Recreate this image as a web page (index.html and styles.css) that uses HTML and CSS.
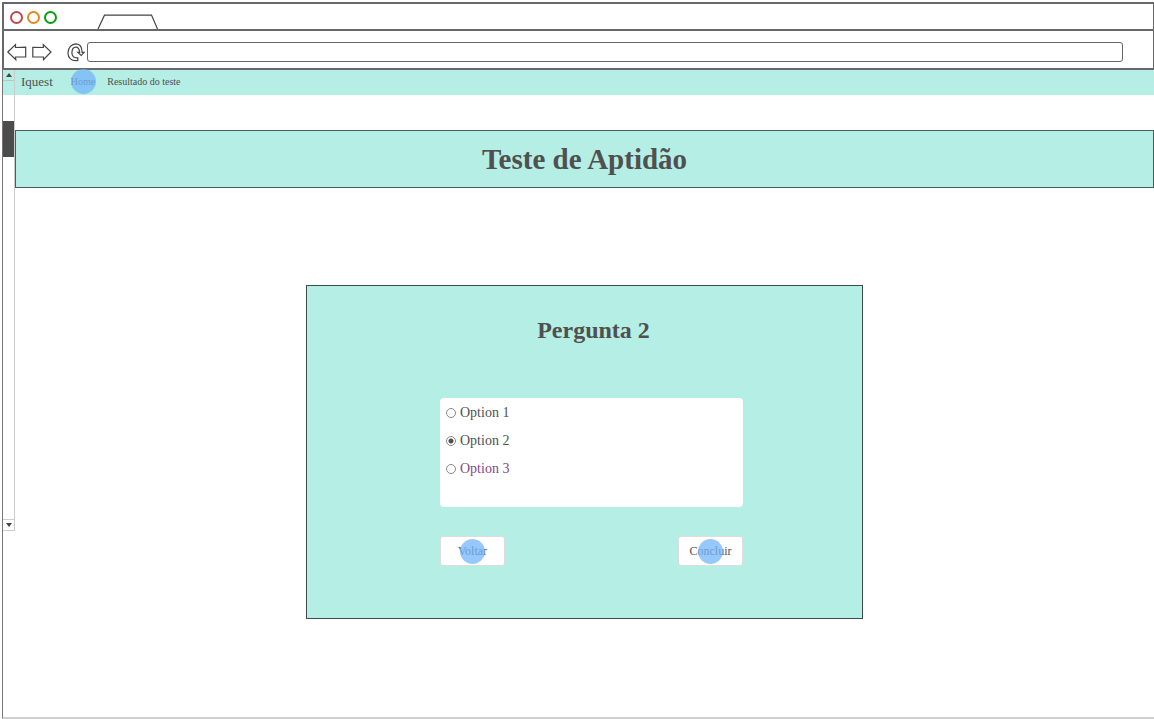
FILE: index.html
```html
<!DOCTYPE html>
<html lang="pt">
<head>
<meta charset="utf-8">
<title>Iquest - Teste de Aptidão</title>
<link rel="stylesheet" href="styles.css">
</head>
<body>
<div class="window">
  <header class="chrome">
    <div class="tabs">
      <span class="light light-close"></span>
      <span class="light light-min"></span>
      <span class="light light-max"></span>
      <svg class="tab" width="62" height="15" viewBox="0 0 62 15" aria-hidden="true"><path d="M1 15L7.500 1.200L54.500 1L60.500 15"/></svg>
    </div>
    <div class="toolbar">
      <button class="tool" aria-label="Voltar página"><svg width="20" height="18" viewBox="0 0 20 18"><path d="M.8 9L8.500 1.600V4.500L18.700 4.200V14H8.500L8.800 16.700Z"/></svg></button>
      <button class="tool" aria-label="Avançar página"><svg width="20" height="18" viewBox="0 0 20 18"><path d="M.8 4.300L11.300 4.500V1.600L19 9L11.500 16.700V14H.8Z"/></svg></button>
      <button class="tool reload" aria-label="Recarregar"><svg width="18" height="20" viewBox="0 0 18 20"><path d="M10.800 18.500C4.500 19.500.8 15.800 1 10.800C1.200 5.500 4.500 2 9 1.800C12.700 1.900 15 5.200 15.100 10.300H17.200L14.200 13.500L10.900 10.400H12.700C12.200 6.800 10.800 5.100 8.900 5.200C6.500 5.300 5 7.500 4.900 10.500C4.800 14 6.800 16.200 10.800 15.800Z"/></svg></button>
      <input class="address" type="text" aria-label="Endereço">
    </div>
  </header>

  <div class="page">
    <div class="scrollbar" aria-hidden="true">
      <span class="arrow"><svg width="6" height="4" viewBox="0 0 6 4"><path d="M3 0L6 4H0Z"/></svg></span>
      <span class="thumb"></span>
      <span class="arrow arrow-down"><svg width="6" height="4" viewBox="0 0 6 4"><path d="M0 0H6L3 4Z"/></svg></span>
    </div>
    <nav class="nav">
      <a class="brand" href="#">Iquest</a>
      <a class="link hotspot" href="#">Home</a>
      <a class="link" href="#">Resultado do teste</a>
    </nav>
    <main class="content">
      <h1 class="title">Teste de Aptidão</h1>
      <form class="card">
        <h2 class="question">Pergunta 2</h2>
        <div class="options">
          <label class="option"><input type="radio" name="answer">Option 1</label>
          <label class="option"><input type="radio" name="answer" checked>Option 2</label>
          <label class="option option-alt"><input type="radio" name="answer">Option 3</label>
        </div>
        <div class="actions">
          <button class="action hotspot" type="button">Voltar</button>
          <button class="action hotspot" type="button">Concluir</button>
        </div>
      </form>
    </main>
  </div>
</div>
</body>
</html>
```
FILE: styles.css
```css
* { box-sizing: border-box; }

body {
  margin: 0;
  background: #fff;
  color: #505050;
  font-family: "Liberation Serif", "Times New Roman", serif;
}

.window {
  display: flex;
  flex-direction: column;
  min-height: 100vh;
  padding: 2px 0 0 2px;
}

.chrome { border: 2px solid #686868; border-right-width: 1px; }

.tabs {
  display: flex;
  align-items: center;
  gap: 4px;
  height: 25px;
  padding-left: 6px;
}

.light {
  width: 13px;
  height: 13px;
  margin-top: 2px;
  border: 2px solid;
  border-radius: 50%;
}
.light-close { border-color: #c0484e; }
.light-min { border-color: #e08a20; }
.light-max { border-color: #05a010; }

.tab { align-self: flex-end; margin-left: 36px; }

.tab path, .tool path {
  fill: none;
  stroke: #444;
  stroke-width: 1.2;
}

.toolbar {
  display: flex;
  align-items: center;
  height: 39px;
  padding: 5px 30px 0 3px;
  border-top: 2px solid #686868;
}

.tool {
  display: flex;
  padding: 0;
  margin-right: 5px;
  border: 0;
  background: none;
}
.reload { margin: 0 2px 0 10px; }

.address {
  flex: 1;
  min-width: 0;
  height: 20px;
  padding: 0 6px;
  border: 1px solid #666;
  border-radius: 3px;
  background: #fff;
  font: inherit;
}

.page {
  position: relative;
  flex: 1;
  border-left: 1px solid #777;
  border-bottom: 2px solid #d0d0d0;
}

/* Lies over the left end of the navigation bar */
.scrollbar {
  position: absolute;
  top: 0;
  left: 0;
  display: flex;
  flex-direction: column;
  width: 12px;
  height: 461px;
  border: 1px solid #ccc;
  border-width: 0 1px 1px 0;
}

.arrow {
  display: flex;
  justify-content: center;
  align-items: center;
  height: 11px;
  border-bottom: 1px solid #b5c8c4;
}
.arrow path { fill: #444; }
.arrow-down { margin-top: auto; border-top: 1px solid #ccc; border-bottom: 0; }

.thumb { height: 36px; margin-top: 40px; background: #4c4c4c; }

.nav {
  display: flex;
  align-items: center;
  height: 25px;
  padding: 0 0 2px 18px;
  background: #b4eee4;
}
.nav a { color: #505050; text-decoration: none; }
.nav .brand { margin-right: 18px; font-size: 13px; }
.nav .link { margin-right: 12px; font-size: 10px; }

.content {
  display: flex;
  flex-direction: column;
  align-items: center;
  padding: 35px 0 90px 12px;
}

.title {
  width: 100%;
  margin: 0 0 97px;
  padding: 11px 0 10px;
  border: 1px solid #4c5c5a;
  background: #b4eee4;
  font-size: 29px;
  line-height: 35px;
  text-align: center;
}

.card {
  width: 100%;
  max-width: 557px;
  padding: 30px 119px 52px 133px;
  border: 1px solid #3c4a48;
  background: #b4eee4;
}

.question {
  margin: 0 0 53px;
  padding-left: 4px;
  font-size: 24px;
  line-height: 29px;
  text-align: center;
}

.options {
  display: flex;
  flex-direction: column;
  align-items: flex-start;
  gap: 8px;
  padding: 5px 6px 28px;
  border-radius: 4px;
  background: #fff;
}

.option {
  display: flex;
  align-items: center;
  gap: 4px;
  font-size: 14px;
  line-height: 20px;
}
.option-alt { color: #84478a; }

.option input {
  appearance: none;
  width: 10px;
  height: 10px;
  margin: 0;
  border: 1px solid #888;
  border-radius: 50%;
}
.option input:checked { background: radial-gradient(circle, #505050 2px, #fff 3px); }

.actions {
  display: flex;
  justify-content: space-between;
  margin-top: 29px;
}

.action {
  width: 65px;
  height: 30px;
  padding: 0;
  border: 1px solid #ddd;
  border-radius: 3px;
  background: #fff;
  color: #505050;
  font-family: inherit;
  font-size: 12px;
}

.hotspot { position: relative; }
.hotspot::after {
  content: "";
  position: absolute;
  inset: 0;
  width: 25px;
  height: 25px;
  margin: auto;
  border-radius: 50%;
  background: rgba(115, 182, 250, 0.75);
}
.link.hotspot::after { inset: -6px 0; }
```
